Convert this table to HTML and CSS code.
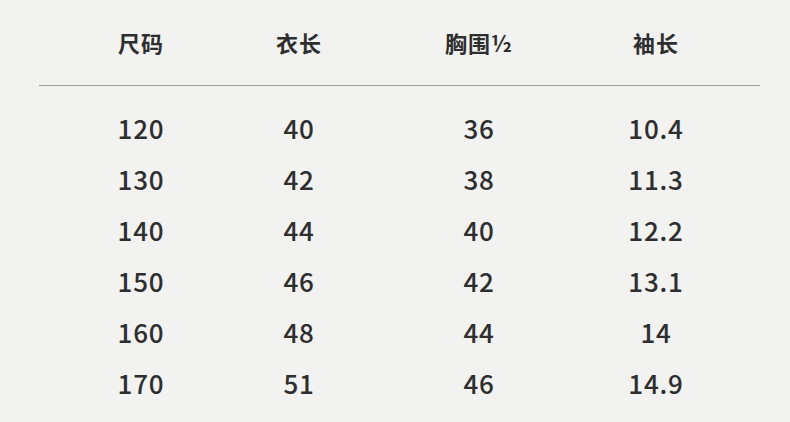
FILE: index.html
```html
<!DOCTYPE html>
<html lang="zh">
<head>
<meta charset="utf-8">
<link rel="stylesheet" href="styles.css">
</head>
<body>
<div class="table">
  <div class="row head">
    <div>尺码</div><div>衣长</div><div>胸围½</div><div>袖长</div>
  </div>
  <div class="rule"></div>
  <div class="rows">
    <div class="row"><div>120</div><div>40</div><div>36</div><div>10.4</div></div>
    <div class="row"><div>130</div><div>42</div><div>38</div><div>11.3</div></div>
    <div class="row"><div>140</div><div>44</div><div>40</div><div>12.2</div></div>
    <div class="row"><div>150</div><div>46</div><div>42</div><div>13.1</div></div>
    <div class="row"><div>160</div><div>48</div><div>44</div><div>14</div></div>
    <div class="row"><div>170</div><div>51</div><div>46</div><div>14.9</div></div>
  </div>
</div>
</body>
</html>
```
FILE: styles.css
```css
html, body {
  margin: 0;
  padding: 0;
  background: #f2f2f0;
}
.table {
  width: 790px;
  height: 422px;
  padding-top: 18px;
  box-sizing: border-box;
  font-family: "Noto Sans CJK SC", "Noto Sans", sans-serif;
  color: #2e2e2e;
}
.row {
  display: grid;
  grid-template-columns: 162px 154px 206px 148px;
  margin-left: 60px;
  text-align: center;
  font-size: 26px;
  font-weight: 500;
  line-height: 51px;
  letter-spacing: 0.8px;
}
.head {
  font-weight: 700;
  font-size: 22px;
  line-height: 48px;
  margin-bottom: 19px;
  letter-spacing: 1px;
}
.rule {
  height: 1px;
  background: #9c9c9c;
  margin: 0 30px 0 39px;
}
.rows {
  padding-top: 16px;
}
```
